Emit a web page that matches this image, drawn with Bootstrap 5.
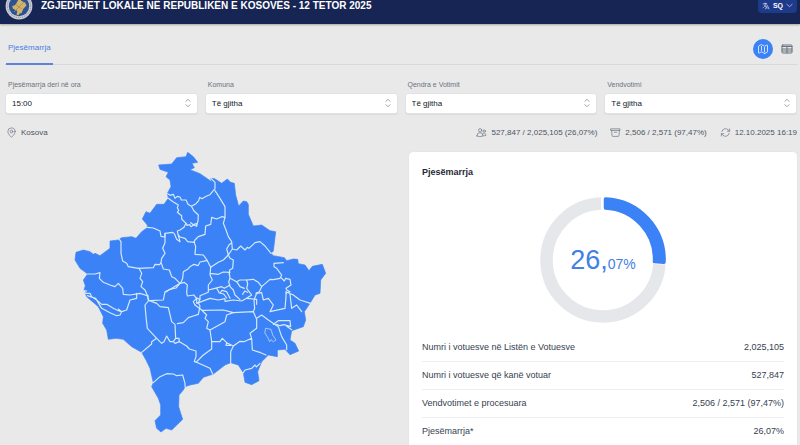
<!DOCTYPE html>
<html lang="sq">
<head>
<meta charset="utf-8">
<meta name="viewport" content="width=device-width, initial-scale=1">
<title>Zgjedhjet Lokale 2025</title>
<link href="https://cdn.jsdelivr.net/npm/bootstrap@5.3.0/dist/css/bootstrap.min.css" rel="stylesheet">
<style>
body { font-family: "Liberation Sans", Arial, sans-serif; font-size: 8px; line-height: 12px; color: #374151; background: #e9e9e9; }
svg { display: block; flex: none; }
.line-icon { fill: none; stroke: currentColor; stroke-width: 1.5; stroke-linecap: round; stroke-linejoin: round; }
.site-head { height: 37px; margin-top: -13px; padding: 0 3px 0 5px; background: #172554; color: #fff; box-shadow: 0 1px 2px rgba(0,0,0,.3); }
.site-title { font-size: 10px; line-height: 14px; font-weight: 700; }
.lang-btn { height: 15px; gap: 3px; padding: 0 4px; border-radius: 4px; background: #1e3a8a; color: #fff; font-size: 7px; line-height: 9px; font-weight: 700; border: 0; }
.site-main { padding: 0 3px 0 5px; }
.tab-bar { height: 41px; border-bottom: 1px solid #d5d8dc; }
.tab-link { height: 32px; margin: 0 0 -1px 1px; padding: 0 2px; color: #4b7de0; border-bottom: 2px solid #5a85dd; text-decoration: none; }
.view-group { gap: 4px; margin-bottom: 5px; }
.view-btn { width: 20px; height: 20px; padding: 0; border: 0; border-radius: 50%; background: transparent; color: #6b7280; }
.view-btn.is-on { background: #3b82f6; color: #fff; }
.filters { gap: 7px; padding-top: 14px; }
.filter-item { flex: 1 1 0; min-width: 0; }
.filter-item label { display: block; padding-left: 3px; margin-bottom: 2px; font-size: 7px; line-height: 12px; color: #6b7280; }
.filter-item select { appearance: none; width: 100%; height: 21px; padding: 0 6px; border: 1px solid #e0e2e6; border-radius: 3px; background: #fff; color: #111827; font-size: 8px; box-shadow: 0 1px 1px rgba(0,0,0,.06); }
.filter-box { position: relative; }
.filter-box svg { position: absolute; right: 5px; top: 5px; color: #8b919b; pointer-events: none; }
.status { height: 37px; padding-left: 1px; color: #4b5563; }
.status svg { color: #6b7280; }
.status-list { gap: 13px; }
.panels { display: grid; grid-template-columns: 398fr 388fr; gap: 6px; }
.map-col { min-width: 0; }
.map-col svg { width: 280px; height: auto; max-width: 100%; margin-top: -6px; margin-right: 8px; }
.result-card { min-width: 0; padding: 13px 13px 0; border-radius: 4px 4px 0 0; background: #fff; box-shadow: 0 0 1px rgba(0,0,0,.15); font-size: 9px; line-height: 14px; margin-top: 1px; }
.result-card h2 { font-size: 9px; line-height: 14px; font-weight: 700; color: #1f2937; margin: 0 0 18px; }
.donut { margin: 0 auto 10px; }
.result-rows th, .result-rows td { height: 28px; padding: 0; font-weight: 400; vertical-align: middle; border-bottom: 1px solid #eceef0; }
.result-rows tr:last-child > * { border-bottom: 0; }
</style>
</head>
<body>
<div class="d-flex flex-column vh-100 overflow-hidden">
<header class="site-head d-flex align-items-center flex-shrink-0">
  <svg width="28" height="28" viewBox="0 0 28 28" aria-label="KQZ">
    <circle cx="14" cy="14" r="13.4" fill="#c9cbd0"/>
    <circle cx="14" cy="14" r="11.6" fill="none" stroke="#77808f" stroke-width=".8" stroke-dasharray="1 1"/>
    <circle cx="14" cy="14" r="10.2" fill="#2e5192"/>
    <path d="M14.5 6l2 3 3.500 1.500 1.500 3-3 3-2 4.500-2 .5-1 2-2-1 .8-3.500-4.500-2.500-.5-2.500 3.200-1 1.500-3z" fill="#d2b36a"/>
    <path d="M9 20l10-10M10 12l7 5" stroke="#a68b55" stroke-width=".8"/>
  </svg>
  <h1 class="site-title mb-0 ms-2">ZGJEDHJET LOKALE NË REPUBLIKËN E KOSOVËS - 12 TETOR 2025</h1>
  <button type="button" class="lang-btn d-flex align-items-center ms-auto">
    <svg class="line-icon" width="8" height="8" viewBox="0 0 24 24"><path d="M10.500 21l5.250-11.250L21 21m-9-3h7.500M3 5.600a48 48 0 0 1 6-.4m0 0q1.700 0 3.300.1M9 5.200V3m3.300 2.300C11.200 10.400 7.700 14.800 3 17.300m9.300-12 2.200.3M6.400 9a18 18 0 0 0 5.800 5.600"/></svg>
    <span>SQ</span>
    <svg class="line-icon" width="7" height="7" viewBox="0 0 24 24"><path d="M3 8l9 8 9-8" stroke-width="2"/></svg>
  </button>
</header>
<main class="site-main d-flex flex-column flex-grow-1">
  <nav class="tab-bar d-flex align-items-end justify-content-between flex-shrink-0">
    <a href="#" class="tab-link d-flex align-items-center">Pjesëmarrja</a>
    <div class="view-group d-flex align-items-center">
      <button type="button" class="view-btn is-on d-flex align-items-center justify-content-center" aria-label="Harta">
        <svg class="line-icon" width="12" height="12" viewBox="0 0 24 24"><path d="M9 6.700V15m6-6v8.300m.5 3.400 4.900-2.400q.6-.3.600-1V4.800q0-1.200-1.200-.8l-4.300 2.200q-.5.200-1 0L9.500 3.300q-.5-.200-1 0L3.600 5.700q-.6.300-.6 1v12.500q0 1.200 1.200.8l4.300-2.200q.5-.2 1 0l5 2.900q.5.200 1 0z"/></svg>
      </button>
      <button type="button" class="view-btn d-flex align-items-center justify-content-center" aria-label="Tabela">
        <svg class="line-icon" width="12" height="12" viewBox="0 0 24 24"><rect x="2" y="4" width="20" height="16" rx="1.500" stroke-width="2"/><path d="M2 7h20M2 12h20M2 16h20M12 7v13" stroke-width="2"/></svg>
      </button>
    </div>
  </nav>
  <form class="filters d-flex flex-shrink-0">
    <div class="filter-item"><label for="f1">Pjesëmarrja deri në ora</label><div class="filter-box"><select id="f1"><option>15:00</option></select><svg class="line-icon" width="10" height="10" viewBox="0 0 24 24"><path d="M7 8l5-5 5 5M7 16l5 5 5-5" stroke-width="2"/></svg></div></div>
    <div class="filter-item"><label for="f2">Komuna</label><div class="filter-box"><select id="f2"><option>Të gjitha</option></select><svg class="line-icon" width="10" height="10" viewBox="0 0 24 24"><path d="M7 8l5-5 5 5M7 16l5 5 5-5" stroke-width="2"/></svg></div></div>
    <div class="filter-item"><label for="f3">Qendra e Votimit</label><div class="filter-box"><select id="f3"><option>Të gjitha</option></select><svg class="line-icon" width="10" height="10" viewBox="0 0 24 24"><path d="M7 8l5-5 5 5M7 16l5 5 5-5" stroke-width="2"/></svg></div></div>
    <div class="filter-item"><label for="f4">Vendvotimi</label><div class="filter-box"><select id="f4"><option>Të gjitha</option></select><svg class="line-icon" width="10" height="10" viewBox="0 0 24 24"><path d="M7 8l5-5 5 5M7 16l5 5 5-5" stroke-width="2"/></svg></div></div>
  </form>
  <div class="status d-flex align-items-center justify-content-between flex-shrink-0">
    <div class="d-flex align-items-center gap-1">
      <svg class="line-icon" width="11" height="11" viewBox="0 0 24 24"><circle cx="12" cy="10" r="3"/><path d="M20 10c0 7-8 12-8 12S4 17 4 10a8 8 0 0 1 16 0z"/></svg>
      <span>Kosova</span>
    </div>
    <div class="status-list d-flex">
      <div class="d-flex align-items-center gap-1">
        <svg class="line-icon" width="11" height="11" viewBox="0 0 24 24"><circle cx="9" cy="7" r="3.500"/><circle cx="18" cy="9" r="2.600"/><path d="M2.200 19.500v-.7a6.500 6.500 0 0 1 13 0v.7a14 14 0 0 1-13 0zM15.200 19.400q3.700.1 6.500-1.200a4.200 4.200 0 0 0-7.600-2.900"/></svg>
        <span>527,847 / 2,025,105 (26,07%)</span>
      </div>
      <div class="d-flex align-items-center gap-1">
        <svg class="line-icon" width="11" height="11" viewBox="0 0 24 24"><path d="M2.300 4h19.400v3.500H2.300zM3.700 7.500l.6 11q.1 2 2 2h11.400q1.900 0 2-2l.6-11M9.500 11.500h5"/></svg>
        <span>2,506 / 2,571 (97,47%)</span>
      </div>
      <div class="d-flex align-items-center gap-1">
        <svg class="line-icon" width="11" height="11" viewBox="0 0 24 24"><path d="M16 9.300h5V4.400M3 19.600v-5h5M3 14.600l3.200 3.200a8.200 8.200 0 0 0 13.800-3.700M4 9.900a8.200 8.200 0 0 1 13.800-3.700L21 9.300"/></svg>
        <span>12.10.2025 16:19</span>
      </div>
    </div>
  </div>
  <div class="panels flex-grow-1">
    <div class="map-col d-flex justify-content-center align-items-start">
      <svg viewBox="0 0 840 885" role="img" aria-label="Harta e Kosovës">
        <path fill="#3b82f6" stroke="#3b82f6" stroke-width="2" stroke-linejoin="round" d="M383 22L400 35 413 52 396 55 403 68 390 74 420 86 455 110 452 100 464 101 485 115 502 102 512 112 523 115 527 150 536 183 550 168 560 170 565 178 565 208 580 243 605 240 630 257 647 260 640 318 633 325 640 332 673 338 680 347 700 342 713 343 715 356 735 360 747 377 757 364 787 358 797 385 782 405 780 445 765 450 750 475 733 500 737 525 730 545 695 557 690 585 705 595 716 618 690 629 675 613 652 615 652 635 625 630 605 650 593 680 597 707 575 719 555 712 550 683 535 660 512 653 495 660 460 687 430 697 415 715 390 720 375 725 370 735 357 750 356 785 362 805 368 823 335 855 318 850 303 861 290 850 285 827 302 810 302 780 295 760 275 725 280 713 270 670 258 645 245 622 215 605 190 583 168 580 145 583 140 555 128 535 130 515 115 485 80 455 72 435 76 422 70 405 83 387 60 370 45 345 48 322 70 315 90 320 100 328 105 325 120 332 150 310 150 288 175 285 185 278 215 275 228 280 245 260 262 248 262 240 247 222 258 200 270 205 290 178 312 178 325 160 322 145 333 125 330 105 318 95 325 82 300 73 296 60 335 57 350 38 378 35Z"/>
        <g fill="none" stroke="#d6eafc" stroke-width="3.500" stroke-linejoin="round" stroke-linecap="round">
          <path d="M323 146l7 5 10-3 5 12 7-6 8 2 4 9 14 0 6 13 10 6 14-8 8-9 3-10 7 4 14-8 10-4 15-18 0-19-12-12"/>
          <path d="M325 160l14 10 16 10-3 8 4 8-4 6 13 10 0 10 13 13 3 6 8-2 4 6 8-5 9 4 2-9-12 4-8-6M410 240l4-12 1-18-13-12-7-13"/>
          <path d="M378 235l-6 12-12 8-8 3 2 10 6 22-10-7-7-17-5-4-23 3-1 11-11-2-3-16-20-9-18-2M354 268l6 8 15 4 8 10 19 2 3-7 10-10 20-7 2-25 15-5 3-21 15 5 15-7 10 2"/>
          <path d="M465 137l15 23 15 25 0 32-5 18 8 20 7 20 10 15 2 22-12 18 5 10 10 5-2 25-9 5-1 15M517 312l13 3 12-12 13 12 7-8 5 3 18-17 15-3 15 13 18 22M515 293l-8 7-7 12 5 18"/>
          <path d="M402 290l5 15-2 23 25 2 12 17 10 20 23-15 15-7 15-15M440 347l-20 4-6 11-12-4-12 7-5 6-15 9-2 20-6 15"/>
          <path d="M315 265l0 28-7 17 7 15-10 15-2 12-4 7-14-1-5 10-45 2-30-5-5-10-12-7-5-23 0-35-5-7M303 352l7 20 18 3 7 20 10 5 15 15"/>
          <path d="M237 370l8 15-5 15 8 10-5 15 12 10 8 18 2 15-10 12 3 35 4 35 28 30-15 10 0 7-30 25"/>
          <path d="M83 387l22 0 15-4-2 17 12 12 20 8 15 5 10-10 13 15 2 18 20 2 30-5 25 8M230 445l0 15-20 5-5 15-5 15-15 5-10-3-15-7-20-12-15 0-15-13-15-10-5-10-14 0-4-8 8 1M82 452l25 8 18 30 25 13 20 9 10-2 5-10-10-8"/>
          <path d="M262 453l5 14M360 415l-12 14-18 4-12 8"/>
          <path d="M290 580l15 15 7-5 8-17 10 17 10 0 7-10 10 0 1 10-13 5-5-5M347 580l-2-42-10-8-10-42-25-3-10-10-22-8 42-2 5-25 17-8 28-17 13-3 9 8-2 22 2 11 20-3 5 8 13 5-5 10 5 10-5 25-15 5-15 5-15 15-18 3"/>
          <path d="M358 590l22 13 8 9 20 6 0 16-5 16 10 3 37 17 8 17M410 650l20-20 25-18 0-22-5-35-10-5 5-20-10-10 5-10-15-15-20-15M280 713l20-18 20-9 20 1 10 5 18-2 7 25 0 10"/>
          <path d="M455 590l25 0 7-10 13 13 20 10-8 17 0 33M500 593l-2 8 14 0M520 603l20-14 12 1 23-10-5-15 20-15 0-27-10-23-60 3-30-8-62 1M520 503l-20 7-5 20-45 25M575 580l2 35 25 8 16 7M550 683l5-8 20-5 10-10 4 6 11-11"/>
          <path d="M590 520l15-10 20 15 30 20 10 30 15 25 0 14M640 538l15-11 35 0 2 18-20-6-12 3-10-4M680 544l15 10"/>
          <path d="M618 550l15 3 5 17 10 15-8 5-7-6-4 6-6-13-8-12z" stroke-width="2"/>
          <path d="M580 500l4-10-2-25 8-20 15-2 5 22 15-5 15 20-10 20 45-10 3-35 0-15M678 440l22 10 20 15 32 10M690 447l5 43 15-10 15 20"/>
          <path d="M405 480l-5-10 10-10 0 15 40-15 25 5 20-4 0 8 25-4 25 3 15-8 30 3 0 15"/>
          <path d="M452 367l-2 23 7 15-12 15 0 22-25 10 0 10M450 385l25 3 15-7 20 1M445 435l20-5 20-5 8 5 17-10M508 385l2 15 20 10 10-5 20 0 20-2 15 9 10 13 25-22 10 1 20-4 5-10-15-20-8-5 0-10 28-2"/>
          <path d="M560 405l3 12-3 13 15 20-15 10M605 425l-7 15-10 5M663 398l10 10 4-8 13 3 3 17-15 10 2 5 10 5-12 5M510 400l-4 10 4 15 10 10 5 15 15 14M470 430l8 14 13 3 9 12M530 410l10 15 13 5M480 444l6-8 14 4 10 20M548 448l6-10 9 4"/>
        </g>
      </svg>
    </div>
    <section class="result-card">
      <h2>Pjesëmarrja</h2>
      <svg class="donut" width="126" height="126" viewBox="0 0 126 126" role="img" aria-label="26,07%">
        <circle cx="63" cy="63" r="56.500" fill="none" stroke="#e5e7eb" stroke-width="12.500"/>
        <path d="M61.500 0h4M63 0v14M126 65.500l-14-.5" stroke="#fff" stroke-width="4" fill="none"/>
        <path d="M65.500 2A61 61 0 0 1 124 65.200L114.500 64.600A51.500 51.500 0 0 0 65.500 11Z" fill="#3b82f6" stroke="#3b82f6" stroke-width="3.500" stroke-linejoin="round"/>
        <text x="63" y="72" text-anchor="middle" fill="#4380e6" font-size="27">26,<tspan font-size="14">07%</tspan></text>
      </svg>
      <table class="result-rows w-100">
        <tbody>
          <tr><th scope="row">Numri i votuesve në Listën e Votuesve</th><td class="text-end">2,025,105</td></tr>
          <tr><th scope="row">Numri i votuesve që kanë votuar</th><td class="text-end">527,847</td></tr>
          <tr><th scope="row">Vendvotimet e procesuara</th><td class="text-end">2,506 / 2,571 (97,47%)</td></tr>
          <tr><th scope="row">Pjesëmarrja*</th><td class="text-end">26,07%</td></tr>
        </tbody>
      </table>
    </section>
  </div>
</main>
</div>
<script src="https://cdn.jsdelivr.net/npm/bootstrap@5.3.0/dist/js/bootstrap.bundle.min.js"></script>
</body>
</html>
